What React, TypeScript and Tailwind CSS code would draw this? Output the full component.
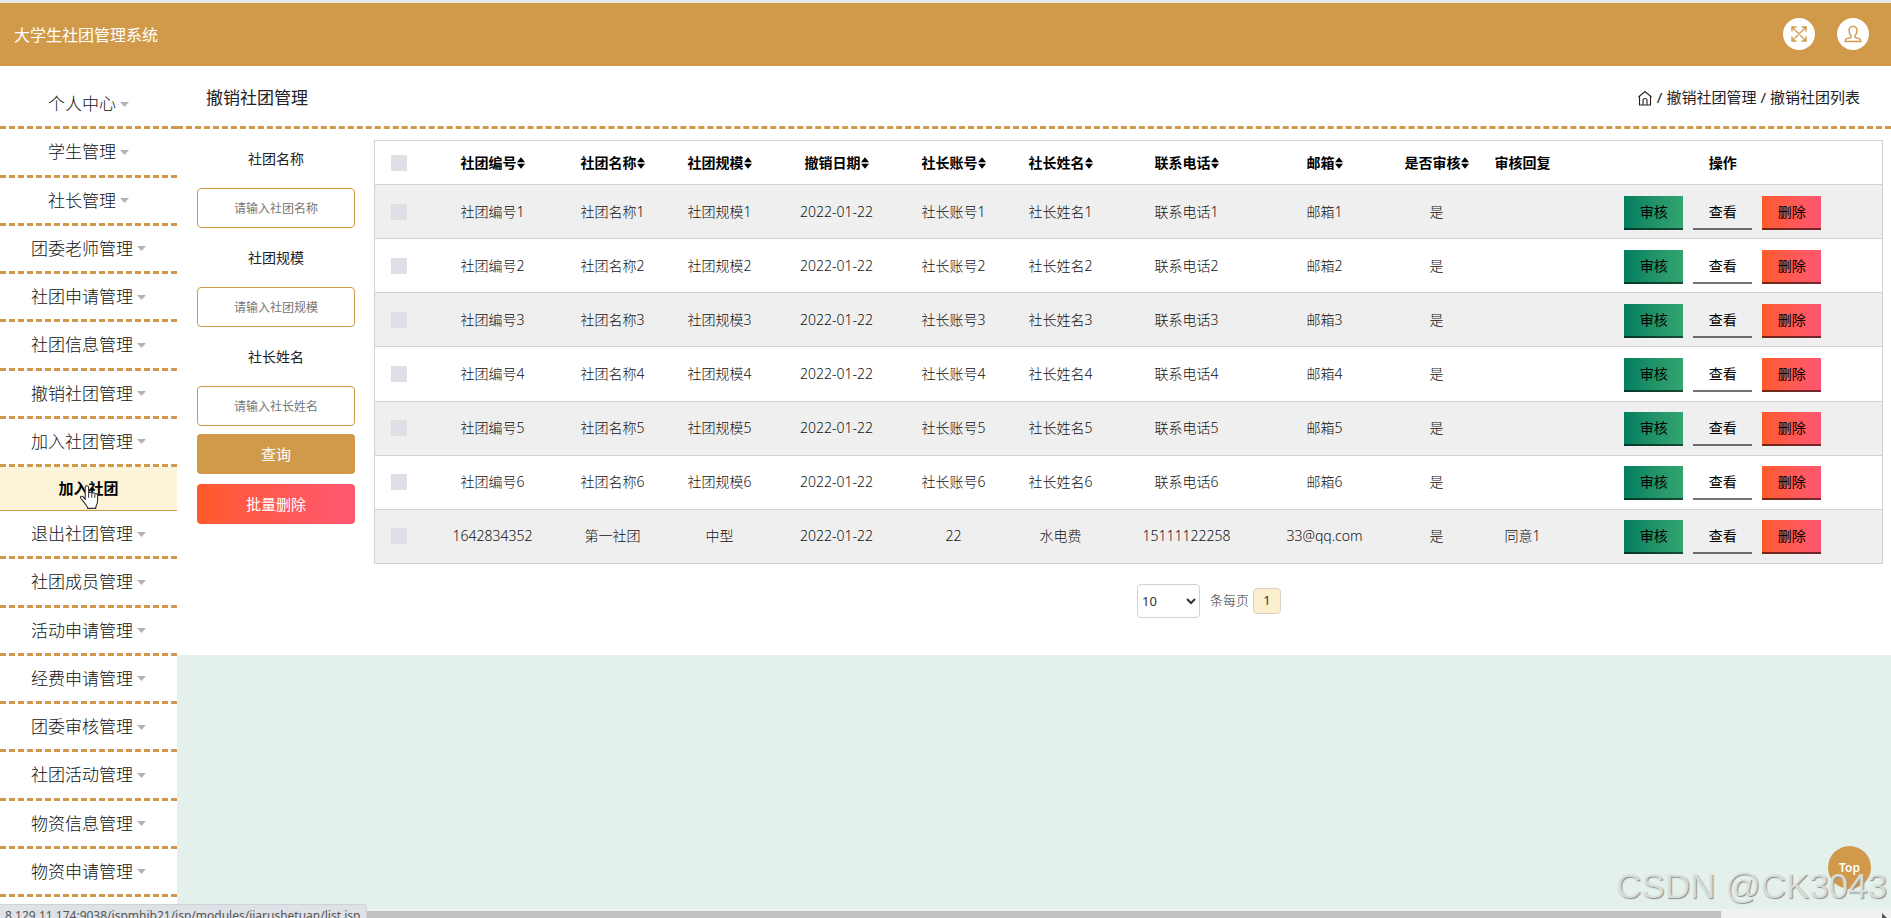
import React from "react";
import clsx from "clsx";

const menu = [
  { label: "个人中心" },
  { label: "学生管理" },
  { label: "社长管理" },
  { label: "团委老师管理" },
  { label: "社团申请管理" },
  { label: "社团信息管理" },
  { label: "撤销社团管理" },
  { label: "加入社团管理", child: "加入社团" },
  { label: "退出社团管理" },
  { label: "社团成员管理" },
  { label: "活动申请管理" },
  { label: "经费申请管理" },
  { label: "团委审核管理" },
  { label: "社团活动管理" },
  { label: "物资信息管理" },
  { label: "物资申请管理" },
];

const columns = [
  { label: "社团编号", width: "w-[130px]", sortable: true },
  { label: "社团名称", width: "w-[110px]", sortable: true },
  { label: "社团规模", width: "w-[104px]", sortable: true },
  { label: "撤销日期", width: "w-[130px]", sortable: true },
  { label: "社长账号", width: "w-[104px]", sortable: true },
  { label: "社长姓名", width: "w-[110px]", sortable: true },
  { label: "联系电话", width: "w-[142px]", sortable: true },
  { label: "邮箱", width: "w-[134px]", sortable: true },
  { label: "是否审核", width: "w-[90px]", sortable: true },
  { label: "审核回复", width: "w-[82px]", sortable: false },
  { label: "操作", width: "w-[319px]", sortable: false },
];

const rows = [
  ...[1, 2, 3, 4, 5, 6].map((n) => [
    `社团编号${n}`,
    `社团名称${n}`,
    `社团规模${n}`,
    "2022-01-22",
    `社长账号${n}`,
    `社长姓名${n}`,
    `联系电话${n}`,
    `邮箱${n}`,
    "是",
    "",
  ]),
  ["1642834352", "第一社团", "中型", "2022-01-22", "22", "水电费", "15111122258", "33@qq.com", "是", "同意1"],
];

const filters = [
  { id: "mingcheng", label: "社团名称", placeholder: "请输入社团名称" },
  { id: "guimo", label: "社团规模", placeholder: "请输入社团规模" },
  { id: "xingming", label: "社长姓名", placeholder: "请输入社长姓名" },
];

const SortIcon = () => (
  <svg className="inline-block h-3 w-2 align-[-1px]" viewBox="0 0 8 12" fill="currentColor">
    <path d="M4 0.3 8 5.2H0zM4 11.7 0 6.8h8z" />
  </svg>
);

const HandCursor = () => (
  <svg className="pointer-events-none absolute left-[79px] top-[18px] h-[25px] w-5" viewBox="0 0 20 25">
    <path
      d="M6.2 14.5V2.6C6.2 1.4 7 .8 7.9.8s1.7.7 1.7 1.8v5.6c.3-.7.9-1 1.6-1 .9 0 1.5.5 1.6 1.3.3-.5.8-.8 1.4-.8.9 0 1.5.6 1.6 1.5.3-.4.7-.6 1.2-.6.9 0 1.6.7 1.6 1.8v5c0 2-.4 3-1 4.3-.7 1.5-.9 2-.9 3.7H8.6c0-1.5-.5-2.3-1.6-3.5C5.4 18.1 4.5 16.4 3 14.8c-1-1.1-2-1.8-1.6-2.8.4-.9 1.6-1 2.5-.3.9.7 1.5 1.6 2.3 2.8z"
      fill="#fff"
      stroke="#333"
      strokeWidth="1.1"
      strokeLinejoin="round"
    />
    <path d="M9.6 8.5v4.2M12.8 9v3.7M15.8 10v2.7" stroke="#333" strokeWidth="1" fill="none" />
  </svg>
);

const Header = () => (
  <header className="flex h-[66px] shrink-0 items-center justify-between border-t-[3px] border-[#e6e6e6] bg-[#d19a4a] pl-3.5 pr-[22px]">
    <h1 className="text-base text-white">大学生社团管理系统</h1>
    <div className="flex gap-[22px] pb-0.5">
      <button aria-label="全屏" className="flex size-8 items-center justify-center rounded-full bg-white text-[#d19a4a]">
        <svg className="size-4" viewBox="0 0 16 16" fill="none" stroke="currentColor" strokeWidth="1.4">
          <path d="M1.5 1.5l13 13M14.5 1.5l-13 13M1 5.5V1h4.5M10.5 1H15v4.5M15 10.5V15h-4.5M5.5 15H1v-4.5" />
        </svg>
      </button>
      <button aria-label="用户" className="flex size-8 items-center justify-center rounded-full bg-white text-[#d19a4a]">
        <svg className="size-[18px]" viewBox="0 0 18 18" fill="none" stroke="currentColor" strokeWidth="1.4">
          <path d="M7 10.5C5.5 9.3 5 7.5 5 5.5 5 2.8 6.6 1.4 9 1.4s4 1.4 4 4.1c0 2-.5 3.8-2 5v1.3c0 .5.3.8.8.9l2.7.7c1.6.4 2.3 1.2 2.4 3.1H1.1c.1-1.900.8-2.700 2.400-3.100l2.700-.7c.5-.1.8-.4.800-.9z" />
        </svg>
      </button>
    </div>
  </header>
);

const Sidebar = () => (
  <nav className="w-[177px] shrink-0 bg-white pt-[15px]">
    <ul className="flex min-h-[816px] flex-col">
      {menu.map((item) => (
        <React.Fragment key={item.label}>
          <li className="flex grow border-b-[3px] border-dashed border-[#d19a4a]">
            <a href="#" className="flex grow items-center justify-center gap-1 pt-px text-[17px] leading-6 font-light text-[#111]">
              {item.label}
              <svg className="h-[5px] w-[9px] shrink-0" viewBox="0 0 9 5" fill="#b3b3b3">
                <path d="M0 0h9L4.5 5z" />
              </svg>
            </a>
          </li>
          {item.child && (
            <li className="relative h-11 shrink-0 border-b border-[#d19a4a] bg-[#fcf3d9]">
              <a href="#" className="flex h-full items-center justify-center text-[15px] font-bold text-black">
                {item.child}
              </a>
              <HandCursor />
            </li>
          )}
        </React.Fragment>
      ))}
    </ul>
  </nav>
);

const SearchForm = () => (
  <form className="flex w-[158px] shrink-0 flex-col" onSubmit={(e) => e.preventDefault()}>
    {filters.map((f) => (
      <React.Fragment key={f.id}>
        <label htmlFor={f.id} className="flex h-[59px] items-center justify-center text-sm text-[#222]">
          {f.label}
        </label>
        <input
          id={f.id}
          type="text"
          placeholder={f.placeholder}
          className="h-10 w-full rounded-sm border border-[#d19a4a] bg-white text-center text-xs placeholder:text-[#777]"
        />
      </React.Fragment>
    ))}
    <button type="submit" className="mt-2 h-10 rounded bg-[#d19a4a] text-[15px] text-white">
      查询
    </button>
    <button type="button" className="mt-2.5 h-10 rounded bg-linear-to-r from-[#ff5a28] to-[#ff5770] text-[15px] text-white">
      批量删除
    </button>
  </form>
);

const actionClass = "h-[34px] w-[59px] border-b-2 border-black/55 text-sm text-black";

const DataTable = () => (
  <table className="h-[424px] w-full table-fixed border-collapse border border-[#d2d2d2] text-center text-sm">
    <thead>
      <tr className="h-11 border-b border-[#d2d2d2] text-black">
        <th className="w-[53px] py-0 pl-0 pr-1">
          <input type="checkbox" aria-label="全选" className="mx-auto block size-4 appearance-none bg-[#dde1e6]" />
        </th>
        {columns.map((c) => (
          <th key={c.label} className={clsx(c.width, "whitespace-nowrap p-0 font-bold")}>
            {c.label}
            {c.sortable && <SortIcon />}
          </th>
        ))}
      </tr>
    </thead>
    <tbody>
      {rows.map((row) => (
        <tr key={row[0]} className="h-[54px] border-b border-[#d2d2d2] text-[#111] odd:bg-[#efefef]">
          <td className="py-0 pl-0 pr-1">
            <input type="checkbox" aria-label={`选择${row[0]}`} className="mx-auto block size-4 appearance-none bg-[#dde1e6]" />
          </td>
          {row.map((cell, j) => (
            <td key={j} className="whitespace-nowrap p-0 font-light">
              {cell}
            </td>
          ))}
          <td className="p-0">
            <div className="flex justify-center gap-2.5 pt-0.5">
              <button className={clsx(actionClass, "bg-linear-to-r from-[#007f60] to-[#33a56f]")}>审核</button>
              <button className={actionClass}>查看</button>
              <button className={clsx(actionClass, "bg-linear-to-r from-[#ff5a28] to-[#ff5770]")}>删除</button>
            </div>
          </td>
        </tr>
      ))}
    </tbody>
  </table>
);

const Pager = () => (
  <div className="flex items-center justify-center pl-[163px] pt-5 text-[13px] text-[#333]">
    <select id="pageSize" aria-label="每页条数" className="h-[34px] w-[63px] rounded border border-[#d2d2d2] bg-white">
      <option>10</option>
      <option>20</option>
      <option>50</option>
    </select>
    <label htmlFor="pageSize" className="ml-2.5 mr-1 font-light">
      条每页
    </label>
    <button className="h-[26px] w-7 rounded-sm border border-[#d8d3c4] bg-[#fbefcd]">1</button>
  </div>
);

const App = () => {
  return (
    <div className="relative flex h-screen flex-col overflow-hidden bg-[#e4f0eb] font-['Noto_Sans','Noto_Sans_CJK_SC',sans-serif]">
      <Header />
      <div className="flex min-h-0 grow">
        <Sidebar />
        <main className="min-w-0 grow">
          <div className="bg-white pb-[37px]">
            <div className="flex h-[63px] items-center justify-between border-b-[3px] border-dashed border-[#d19a4a] pl-[29px] pr-[31px] pt-[3px] text-[#222]">
              <h2 className="text-[17px]">撤销社团管理</h2>
              <div className="flex items-center gap-1 text-[15px]">
                <a href="#" aria-label="首页">
                  <svg className="size-4" viewBox="0 0 16 16" fill="none" stroke="currentColor" strokeWidth="1.1">
                    <path d="M1.5 7 8 1.500l6.500 5.500M2.500 6.500V15h11V6.500M6 15v-4.500a2 2 0 0 1 4 0V15" />
                  </svg>
                </a>
                <span>/</span>
                <span>撤销社团管理</span>
                <span>/</span>
                <span>撤销社团列表</span>
              </div>
            </div>
            <div className="flex items-start gap-[19px] pl-5 pr-2.5">
              <SearchForm />
              <div className="min-w-0 grow pt-[11px]">
                <DataTable />
                <Pager />
              </div>
            </div>
          </div>
        </main>
      </div>

      <button className="absolute bottom-[29px] right-5 size-[43px] rounded-full bg-[#d19a4a] text-xs font-semibold text-white">
        Top
      </button>
      <div className="pointer-events-none absolute bottom-3 right-1 font-['Liberation_Sans',Arial,sans-serif] text-[35px] leading-10 text-[#e3e8e6]/85 [text-shadow:1px_1px_1px_#8a8f8d]">
        CSDN @CK3043
      </div>

      {/* horizontal scrollbar */}
      <div className="relative h-[9px] shrink-0 bg-[#f1f1f1] pt-0.5">
        <div className="h-full w-[91%] bg-[#c1c1c1]" />
        <svg className="absolute right-1 top-1 h-[5px] w-[6px]" viewBox="0 0 6 5" fill="#505050">
          <path d="M1 0l5 5H1z" />
        </svg>
      </div>
      {/* link target bubble */}
      <div className="absolute bottom-0 left-0 h-3.5 w-[367px] overflow-hidden rounded-tr border border-b-0 border-l-0 border-[#cfd2d6] bg-[#dee1e6] pl-[5px] text-[12px] leading-[22px] text-[#555]">
        8.129.11.174:9038/jspmhib21/jsp/modules/jiarushetuan/list.jsp
      </div>
    </div>
  );
};

export default App;
